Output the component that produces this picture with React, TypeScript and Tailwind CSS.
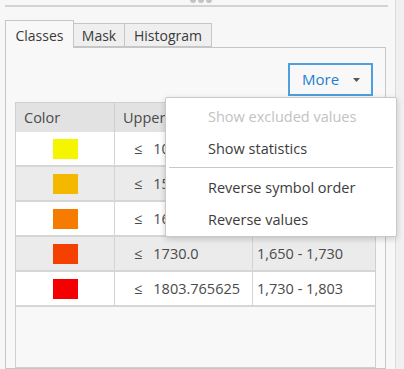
const ROWS = [
  { color: "bg-[#f5f500]", upper: "1060.0", range: "1,000 - 1,060", alt: false },
  { color: "bg-[#f5b800]", upper: "1570.0", range: "1,060 - 1,570", alt: true },
  { color: "bg-[#f57c00]", upper: "1650.0", range: "1,570 - 1,650", alt: false },
  { color: "bg-[#f54100]", upper: "1730.0", range: "1,650 - 1,730", alt: true },
  { color: "bg-[#f50000]", upper: "1803.765625", range: "1,730 - 1,803", alt: false },
];

function MoreMenu() {
  return (
    <div className="absolute left-[165px] top-[97px] w-[232px] bg-white border border-[#c9c9c9] rounded-[2px] shadow-[0_2px_6px_rgba(0,0,0,0.18)] pt-[3px] text-[14.5px]">
      <div className="h-[32px] flex items-center pl-[42px] text-[#c2c2c2]">Show excluded values</div>
      <div className="h-[32px] flex items-center pl-[42px] text-[#3c3c3c]">Show statistics</div>
      <div className="mt-[2px] mb-[4px] mx-[3px] h-px bg-[#c8c8c8]" />
      <div className="h-[32px] flex items-center pl-[42px] text-[#3c3c3c]">Reverse symbol order</div>
      <div className="h-[32px] flex items-center pl-[42px] text-[#3c3c3c]">Reverse values</div>
    </div>
  );
}

export default function App() {
  return (
    <div className="relative w-[404px] h-[369px] overflow-hidden bg-[#f7f7f7] flex font-['Open_Sans',sans-serif]">
      <div className="w-[396px] border-r border-[#dcdcdc] pl-[5px] flex flex-col">
        {/* drag handle */}
        <div className="h-[5px] flex justify-center gap-[2px] pl-[2px] -mt-[3px]">
          <span className="w-[6px] h-[6px] rounded-full bg-[#c4c4c4]" />
          <span className="w-[6px] h-[6px] rounded-full bg-[#c4c4c4]" />
          <span className="w-[6px] h-[6px] rounded-full bg-[#c4c4c4]" />
        </div>
        <div className="mt-[3px] h-[2px] w-[383px] bg-[#d3d3d3]" />

        {/* tabs */}
        <div className="mt-[13px] flex items-end text-[14px] text-[#3a3a3a]">
          <div className="relative z-10 -mb-px h-[28px] w-[69px] border border-b-0 border-[#c6c6c6] bg-[#f8f8f8] flex items-center justify-center pt-[1px]">
            Classes
          </div>
          <div className="h-[24px] w-[51px] border border-l-0 border-[#c6c6c6] bg-[#efefef] flex items-center justify-center">
            Mask
          </div>
          <div className="h-[24px] w-[87px] border border-l-0 border-[#c6c6c6] bg-[#efefef] flex items-center justify-center">
            Histogram
          </div>
        </div>

        {/* panel */}
        <div className="w-[381px] flex-1 border border-[#c6c6c6] bg-[#f8f8f8] flex flex-col">
          <div className="flex justify-end pt-[15px] pr-[12px]">
            <button className="w-[85px] h-[33px] border-2 border-[#4d9fde] bg-[#f8f8f8] flex items-center pl-[12px] pr-[11px] text-[15px] text-[#1f7fd1]">
              <span>More</span>
              <svg className="ml-auto" width="7" height="4" viewBox="0 0 7 4">
                <path d="M0 0h7L3.5 4z" fill="#555" />
              </svg>
            </button>
          </div>

          <div className="mt-[6px] mx-[9px] flex-1 border border-[#d0d0d0] text-[14.5px] text-[#4a4a4a]">
            <div className="h-[29px] flex bg-[#e2e2e2]">
              <div className="w-[99px] border-r border-[#cfcfcf] flex items-center pl-[8px]">Color</div>
              <div className="w-[138px] flex items-center pl-[8px]">Upper</div>
              <div className="flex-1 flex items-center pl-[8px]">Label</div>
            </div>
            {ROWS.map((r) => (
              <div
                key={r.upper}
                className={`h-[35px] flex border-b-2 border-[#d6d6d6] ${r.alt ? "bg-[#ebebeb]" : "bg-white"}`}
              >
                <div className="w-[99px] border-r border-[#d4d4d4] flex items-center justify-center">
                  <span className={`w-[25px] h-[20px] ${r.color}`} />
                </div>
                <div className="w-[138px] border-r border-[#d4d4d4] flex items-center pl-[19px] gap-[11px]">
                  <span>≤</span>
                  <span>{r.upper}</span>
                </div>
                <div className="flex-1 flex items-center pl-[4px]">{r.range}</div>
              </div>
            ))}
          </div>
        </div>
      </div>
      <div className="flex-1 bg-[#f0f0f0]" />

      <MoreMenu />
    </div>
  );
}
